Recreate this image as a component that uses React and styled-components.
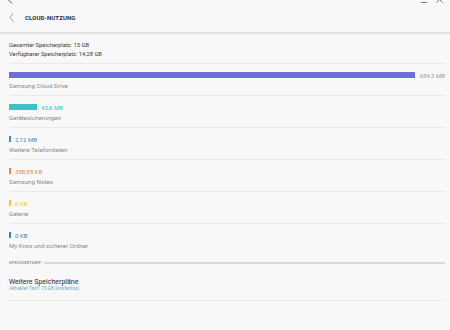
import React from "react";
import styled, { createGlobalStyle } from "styled-components";

const Global = createGlobalStyle`
  html, body { margin: 0; padding: 0; background: #f8f8f8; }
  body { font-family: Roboto, "Noto Sans", "Liberation Sans", sans-serif; -webkit-font-smoothing: antialiased; }
  * { box-sizing: border-box; }
`;

const Page = styled.div`
  width: 450px;
  height: 330px;
  background: #f8f8f8;
  overflow: hidden;
  display: flex;
  flex-direction: column;
`;

const TopStrip = styled.div`
  height: 4px;
  overflow: hidden;
  display: flex;
  justify-content: space-between;
  align-items: flex-end;
  padding: 0 7px 0 7px;
`;

const WinControls = styled.div`
  display: flex;
  gap: 9px;
  align-items: flex-end;
`;

const Header = styled.div`
  height: 30px;
  display: flex;
  align-items: center;
  padding: 0 0 2px 9px;
  border-bottom: 2px solid #e4e4e4;
`;

const Title = styled.div`
  margin-left: 11px;
  font-size: 6px;
  font-weight: 700;
  color: #2e2e2e;
  letter-spacing: 0.1px;
`;

const Body = styled.div`
  padding: 0 5px 0 9px;
`;

const Summary = styled.div`
  padding: 7px 0 4px 0;
  font-size: 5.8px;
  line-height: 9px;
  color: #3a3a3a;
`;

const Row = styled.div`
  border-top: 1px solid #ebebeb;
  height: 32px;
  padding-top: 8px;
  display: flex;
  flex-direction: column;
`;

const BarLine = styled.div`
  display: flex;
  align-items: center;
  height: 6px;
  gap: 4px;
`;

const Bar = styled.div`
  height: 6px;
  background: ${(p) => p.$color};
  flex: ${(p) => (p.$grow ? "1 1 auto" : "0 0 auto")};
`;

const Value = styled.span`
  font-size: 6.1px;
  color: ${(p) => p.$color};
  white-space: nowrap;
`;

const Label = styled.div`
  margin-top: 4px;
  font-size: 6.2px;
  line-height: 8px;
  color: #8a8a8a;
`;

const SectionHead = styled.div`
  margin-top: 5px;
  display: flex;
  align-items: center;
  gap: 3px;
`;

const SectionTitle = styled.span`
  font-size: 4.2px;
  font-weight: 700;
  color: #9a9a9a;
  letter-spacing: 0.1px;
`;

const SectionLine = styled.div`
  flex: 1;
  height: 2px;
  background: #d9d9d9;
`;

const Plan = styled.div`
  padding-top: 13px;
  height: 36px;
  border-bottom: 1px solid #e8e8e8;
`;

const PlanTitle = styled.div`
  font-size: 7px;
  line-height: 8px;
  color: #2a2a2a;
`;

const PlanSub = styled.div`
  font-size: 4.8px;
  line-height: 6px;
  color: #5fb0c8;
`;

const rows = [
  { label: "Samsung Cloud Drive", value: "684,3 MB", color: "#6c70d6", text: "#9a9a9a", grow: true },
  { label: "Gerätesicherungen", value: "45,6 MB", color: "#3fbfcc", text: "#3fbfcc", width: 28 },
  { label: "Weitere Telefondaten", value: "2,12 MB", color: "#4a86c6", text: "#4a86c6", width: 2 },
  { label: "Samsung Notes", value: "358,85 KB", color: "#e08560", text: "#e08560", width: 2 },
  { label: "Galerie", value: "0 KB", color: "#f2c632", text: "#f2c632", width: 2 },
  { label: "My Knox und sicherer Ordner", value: "0 KB", color: "#3f7eb6", text: "#3f7eb6", width: 2 },
];

export default function App() {
  return (
    <Page>
      <Global />
      <TopStrip>
        <svg width="6" height="9" viewBox="0 0 6 9">
          <path d="M5 0.5 L1 4.5 L5 8.5" stroke="#555" strokeWidth="1" fill="none" />
        </svg>
        <WinControls>
          <svg width="6" height="6" viewBox="0 0 6 6">
            <path d="M0 4.5 H6" stroke="#777" strokeWidth="1" />
          </svg>
          <svg width="7" height="9" viewBox="0 0 7 9">
            <path d="M0.5 1.5 L6.5 7.5 M6.5 1.5 L0.5 7.5" stroke="#777" strokeWidth="1" />
          </svg>
        </WinControls>
      </TopStrip>
      <Header>
        <svg width="5" height="9" viewBox="0 0 5 9">
          <path d="M4.3 0.5 L0.8 4.5 L4.3 8.5" stroke="#6aa8b8" strokeWidth="0.9" fill="none" />
        </svg>
        <Title>CLOUD-NUTZUNG</Title>
      </Header>
      <Body>
        <Summary>
          <div>Gesamter Speicherplatz: 15 GB</div>
          <div>Verfügbarer Speicherplatz: 14,28 GB</div>
        </Summary>
        {rows.map((r) => (
          <Row key={r.label}>
            <BarLine>
              <Bar $color={r.color} $grow={r.grow} style={r.grow ? undefined : { width: r.width }} />
              <Value $color={r.text}>{r.value}</Value>
            </BarLine>
            <Label>{r.label}</Label>
          </Row>
        ))}
        <SectionHead>
          <SectionTitle>SPEICHERTARIF</SectionTitle>
          <SectionLine />
        </SectionHead>
        <Plan>
          <PlanTitle>Weitere Speicherpläne</PlanTitle>
          <PlanSub>Aktueller Tarif: 15 GB (kostenlos)</PlanSub>
        </Plan>
      </Body>
    </Page>
  );
}
